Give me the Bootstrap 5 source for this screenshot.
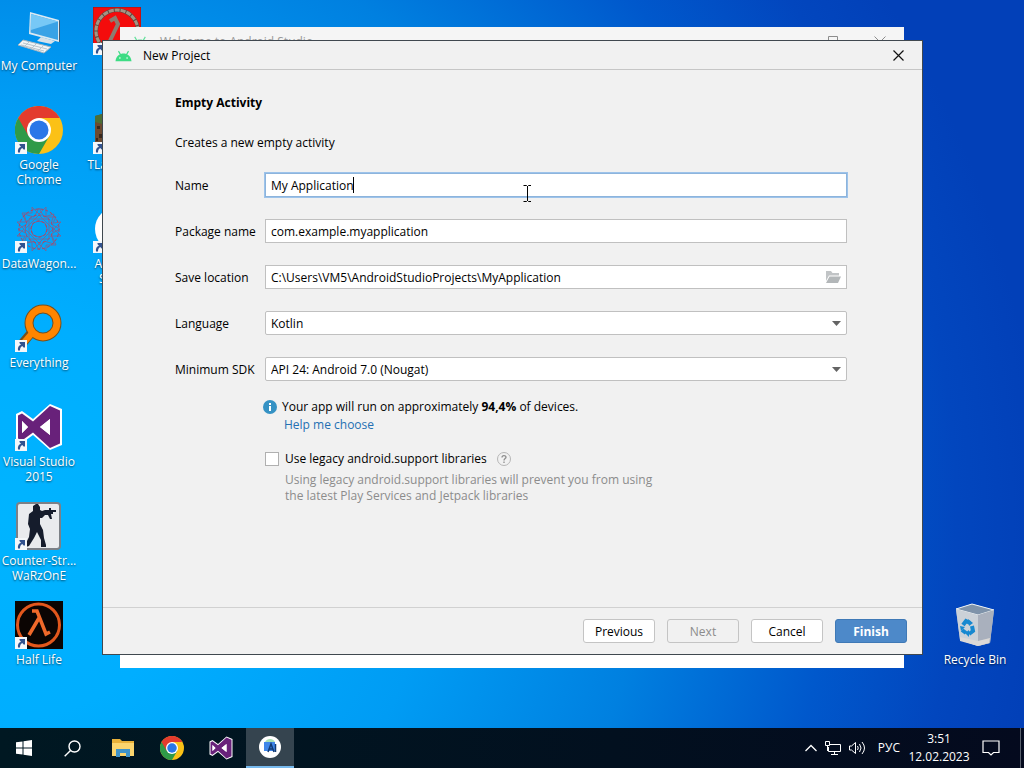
<!DOCTYPE html>
<html lang="en">
<head>
  <meta charset="UTF-8">
  <meta name="viewport" content="width=device-width, initial-scale=1">
  <title>New Project</title>
  <!-- Bootstrap 5 CSS -->
  <link href="https://cdn.jsdelivr.net/npm/bootstrap@5.3.0/dist/css/bootstrap.min.css" rel="stylesheet">
  <style>
    body {
      font-family: "Open Sans", "Noto Sans", sans-serif;
      font-size: 12px;
      line-height: 16px;
      color: #000;
      background: radial-gradient(ellipse 1040px 1000px at 0 520px, #00b4ff 0%, #00aeff 20%, #009cf4 42%, #0080e0 62%, #0058cc 80%, #0246be 92%, #0240b8 100%);
    }
    svg {
      display: block;
      flex-shrink: 0;
    }

    /* Desktop icons */
    .icon-grid {
      display: grid;
      grid-auto-flow: column;
      grid-template-rows: repeat(7, 99px);
      grid-auto-columns: 78px;
    }
    .icon-grid-end {
      margin-right: 10px;
    }
    .icon-grid-end .desk-icon {
      grid-row: 7;
    }
    .desk-icon {
      padding-top: 7px;
      line-height: 15px;
      gap: 3px;
      color: #fff;
      text-shadow: 0 1px 2px rgba(0, 0, 0, .6);
    }

    /* Windows */
    .welcome-window {
      top: 27px;
      bottom: 60px;
      left: 120px;
      right: 120px;
      background: linear-gradient(#f5f5f5 40px, #fff 40px);
      color: #999;
    }
    .welcome-title {
      padding: 9px 18px 0 11px;
      gap: 11px;
      line-height: 12px;
    }
    .project-window {
      top: 40px;
      bottom: 73px;
      left: 102px;
      right: 101px;
      background: #f1f1f1;
      border: 1px solid #40484f;
    }
    .win-title {
      height: 29px;
      padding: 1px 0 0 12px;
      gap: 11px;
      border-bottom: 1px solid #c6c6c6;
    }
    .plain-btn {
      border: 0;
      padding: 0;
      background: none;
      color: inherit;
    }
    .close-btn {
      width: 48px;
      height: 27px;
    }

    /* Form */
    .win-body {
      padding: 25px 75px 0 72px;
    }
    .form-rows {
      display: grid;
      grid-template-columns: 90px 1fr;
      row-gap: 22px;
      align-items: center;
      margin-top: 22px;
    }
    .form-rows label {
      padding-top: 2px;
    }
    .field {
      width: 100%;
      height: 24px;
      padding: 1px 5px 0;
      border: 1px solid #c0c0c0;
      border-radius: 0;
      background-color: #fff;
      color: #000;
      outline: 0;
    }
    .field-active {
      border-color: #8db4dc;
      box-shadow: 0 0 0 1px #9dc3ea;
    }
    select.field {
      appearance: none;
      border-radius: 2px;
    }
    .field-end {
      top: 5px;
      right: 6px;
    }
    .caret {
      top: 4px;
      left: 88px;
      width: 1px;
      height: 16px;
      background: #000;
    }
    .pointer {
      top: 12px;
      left: 258px;
    }
    .hints {
      margin: 17px 0 0 88px;
      line-height: 18px;
    }
    .hint-row {
      gap: 5px;
    }
    .help-link {
      margin-left: 21px;
      color: #2470b3;
    }
    .legacy-row {
      margin-top: 16px;
      padding-left: 2px;
      gap: 6px;
    }
    .tick {
      appearance: none;
      width: 14px;
      height: 14px;
      border: 1px solid #b0b0b0;
      background: #fff;
    }
    .legacy-note {
      padding-left: 22px;
      margin-top: 4px;
      line-height: 16px;
      color: #8c8c8c;
    }
    .win-footer {
      padding: 11px 15px 11px;
      gap: 12px;
      border-top: 1px solid #d1d1d1;
    }
    .wiz-btn {
      width: 72px;
      height: 24px;
      padding: 2px 0 0;
      border: 1px solid #c4c4c4;
      border-radius: 3px;
      background: #fff;
      color: #000;
    }
    .wiz-btn:disabled {
      background: #f1f1f1;
      color: #8c8c8c;
    }
    .wiz-primary {
      background: #4d89c9;
      border-color: #3f79b6;
      color: #fff;
    }

    /* Taskbar */
    .taskbar {
      height: 40px;
      background: linear-gradient(90deg, #001822, #02101f 60%, #040a1e);
      color: #fff;
    }
    .task-btn {
      width: 48px;
      height: 40px;
    }
    .task-apps {
      margin-left: 3px;
      gap: 1px;
    }
    .task-active {
      background: #35444f;
      border-bottom: 2px solid #76b9ed;
    }
    .tray {
      gap: 8px;
    }
    .clock {
      width: 62px;
      line-height: 18px;
    }
    .show-desktop {
      width: 4px;
      height: 40px;
      border-left: 1px solid #59606d;
    }
  </style>
</head>
<body class="vh-100 d-flex flex-column overflow-hidden">

  <!-- Shared icon shapes -->
  <svg width="0" height="0" class="position-absolute" aria-hidden="true">
    <defs>
      <symbol id="shortcut" viewBox="0 0 12 12">
        <rect width="12" height="12" fill="#f4f7fa"/>
        <path d="M3 10.500C2.500 7.500 3.600 5.400 6 4.800L4.600 3.200 4.400 2H10v5.600L8.600 7.400 7.300 6.100C5.600 7 5 8.300 5 10.500Z" fill="#31528f"/>
      </symbol>
      <symbol id="chrome" viewBox="0 0 48 48">
        <circle cx="24" cy="24" r="24" fill="#fbc116"/>
        <path d="M24 24 3.200 12A24 24 0 0 0 24 48L34.400 30Z" fill="#2f9a48"/>
        <path d="M24 12H44.800A24 24 0 0 0 3.200 12L13.600 30 24 24Z" fill="#e33b2e"/>
        <circle cx="24" cy="24" r="12" fill="#fff"/>
        <circle cx="24" cy="24" r="9.500" fill="#2a77e8"/>
      </symbol>
      <symbol id="vstudio" viewBox="0 0 48 48">
        <path d="M35 1 47 6V42L35 47 18 32 7 40 1 37V11L7 8 18 16Z" fill="#fff"/>
        <path d="M35 3 45 7.500V40.500L35 45 18 29.500 7 37.500 3 35.500V12.500L7 10.500 18 18.500ZM35 16 25 24 35 32ZM7 18V30L13 24Z" fill="#68217a" fill-rule="evenodd"/>
        <path d="M35 16 25 24 35 32ZM7 18V30L13 24Z" fill="#fff"/>
      </symbol>
      <symbol id="droid" viewBox="0 0 18 12">
        <path d="M.5 11.500C.8 8 2.600 5.500 5 4.300L3.200 1.200 4.200 .5 6.200 3.900C8 3.300 10 3.300 11.800 3.900L13.800 .5 14.800 1.200 13 4.300C15.400 5.500 17.200 8 17.500 11.500Z" fill="#3ddc84"/>
        <circle cx="5.200" cy="8" r=".8" fill="#fff"/>
        <circle cx="12.800" cy="8" r=".8" fill="#fff"/>
      </symbol>
    </defs>
  </svg>

  <!-- Desktop -->
  <main class="flex-grow-1 position-relative d-flex justify-content-between align-items-start">
    <div class="icon-grid">
      <a href="#" class="desk-icon d-flex flex-column align-items-center text-center text-decoration-none">
        <svg width="48" height="48" viewBox="0 0 48 48">
          <path d="M15 5 44 13V35L14 27Z" fill="#dbe9f2"/>
          <path d="M16 7 43 14.500V33L15.500 25.500Z" fill="#39a2e6"/>
          <path d="M16 7 43 14.500 16 23Z" fill="#77c8f6"/>
          <path d="M44 13 45 13.500V34.500L44 35Z" fill="#3d5972"/>
          <path d="M26 30 33 32 40 34 36 37 22 34Z" fill="#d7e1e8"/>
          <path d="M8 33 36 40 29 46 3 38Z" fill="#f1f4f6" stroke="#a5b4bf"/>
          <path d="M8 36 32 42M6 38 29 44M14 35 9 40M21 37 16 42M28 39 23 44" stroke="#b7c4cd"/>
        </svg>
        <span>My Computer</span>
      </a>
      <a href="#" class="desk-icon d-flex flex-column align-items-center text-center text-decoration-none">
        <svg width="48" height="48" viewBox="0 0 48 48">
          <use href="#chrome"/>
          <use href="#shortcut" y="36" width="12" height="12"/>
        </svg>
        <span>Google<br>Chrome</span>
      </a>
      <a href="#" class="desk-icon d-flex flex-column align-items-center text-center text-decoration-none">
        <svg width="48" height="48" viewBox="0 0 48 48">
          <g fill="none" stroke="#6f6a9c" stroke-width="1">
            <path d="M17 2 24 9 31 2V12H41L38 18 46 17 39 24 46 31H37L41 40H31V46L24 39 17 46V37H7L10 31 2 31 9 24 2 17H11L7 8H17Z"/>
            <path d="M24 3 29 12 39 9 36 19 45 24 36 29 39 39 29 36 24 45 19 36 9 39 12 29 3 24 12 19 9 9 19 12Z"/>
            <path d="M14 14H34V34H14ZM24 10 38 24 24 38 10 24Z"/>
            <path d="M24 16 30 18 32 24 30 30 24 32 18 30 16 24 18 18Z"/>
          </g>
          <g fill="none" stroke="#b8405f" stroke-dasharray="3 2">
            <circle cx="24" cy="24" r="8"/>
            <circle cx="24" cy="24" r="14"/>
            <circle cx="24" cy="24" r="20"/>
          </g>
          <use href="#shortcut" y="36" width="12" height="12"/>
        </svg>
        <span>DataWagon...</span>
      </a>
      <a href="#" class="desk-icon d-flex flex-column align-items-center text-center text-decoration-none">
        <svg width="48" height="48" viewBox="0 0 48 48">
          <path d="M17 28 6 41" stroke="#75501f" stroke-width="9"/>
          <circle cx="28" cy="19" r="14" fill="none" stroke="#75501f" stroke-width="9"/>
          <path d="M18 28 6 42" stroke="#ff8500" stroke-width="6"/>
          <circle cx="28" cy="19" r="14" fill="none" stroke="#ff8500" stroke-width="7"/>
          <use href="#shortcut" y="36" width="12" height="12"/>
        </svg>
        <span>Everything</span>
      </a>
      <a href="#" class="desk-icon d-flex flex-column align-items-center text-center text-decoration-none">
        <svg width="48" height="48" viewBox="0 0 48 48">
          <use href="#vstudio"/>
          <use href="#shortcut" y="36" width="12" height="12"/>
        </svg>
        <span>Visual Studio<br>2015</span>
      </a>
      <a href="#" class="desk-icon d-flex flex-column align-items-center text-center text-decoration-none">
        <svg width="48" height="48" viewBox="0 0 48 48">
          <rect x="2" y="1" width="43" height="46" rx="3" fill="#e9ebee" stroke="#7b8087" stroke-width="2"/>
          <path d="M18 4 21 2H23L25 5V8L27 9 30 8H34V6H36V8H41V10H38V12L36 12 37 17H35L33 13H30L27 16H25V22L28 28 29 36 31 43V45H26V38L22 30 19 36 14 44 11 45 10 43 14 35 15 27 13 22 14 12 18 9Z" fill="#151c2c"/>
          <use href="#shortcut" y="36" width="12" height="12"/>
        </svg>
        <span>Counter-Str...<br>WaRzOnE</span>
      </a>
      <a href="#" class="desk-icon d-flex flex-column align-items-center text-center text-decoration-none">
        <svg width="48" height="48" viewBox="0 0 48 48">
          <rect width="48" height="48" fill="#0b0503"/>
          <circle cx="23.500" cy="24" r="21" fill="none" stroke="#e2571c" stroke-width="3"/>
          <path d="M17 10H22L31 33 35 31M24 17 14 34" fill="none" stroke="#f0692a" stroke-width="3.500"/>
          <use href="#shortcut" y="36" width="12" height="12"/>
        </svg>
        <span>Half Life</span>
      </a>
      <a href="#" class="desk-icon d-flex flex-column align-items-center text-center text-decoration-none" aria-label="Half-Life">
        <svg width="48" height="48" viewBox="0 0 48 48">
          <rect width="48" height="48" fill="#f40c0c" stroke="#8f1a1a"/>
          <circle cx="24" cy="24" r="21" fill="none" stroke="#5d4a42" stroke-width="4"/>
          <circle cx="24" cy="24" r="21" fill="none" stroke="#a59383" stroke-width="3" stroke-dasharray="5 1"/>
          <path d="M17 14 22 11 25 17 15 38" fill="none" stroke="#8d7c70" stroke-width="4"/>
          <use href="#shortcut" y="36" width="12" height="12"/>
        </svg>
      </a>
      <a href="#" class="desk-icon d-flex flex-column align-items-center text-center text-decoration-none">
        <svg width="48" height="48" viewBox="0 0 48 48">
          <path d="M2 10 24 4 46 10V40L24 46 2 40Z" fill="#6c4a31"/>
          <path d="M2 10 24 4 46 10V18L24 22 2 16Z" fill="#4c6f35"/>
          <path d="M4 20h3v3H4ZM6 28h3v4H6ZM3 32h2v3H3Z" fill="#3b281c"/>
          <use href="#shortcut" y="36" width="12" height="12"/>
        </svg>
        <span>TLauncher</span>
      </a>
      <a href="#" class="desk-icon d-flex flex-column align-items-center text-center text-decoration-none">
        <svg width="48" height="48" viewBox="0 0 48 48">
          <circle cx="24" cy="24" r="22" fill="#fff"/>
          <use href="#shortcut" y="36" width="12" height="12"/>
        </svg>
        <span>Android<br>Studio</span>
      </a>
    </div>

    <div class="icon-grid icon-grid-end">
      <a href="#" class="desk-icon d-flex flex-column align-items-center text-center text-decoration-none">
        <svg width="48" height="48" viewBox="0 0 48 48">
          <path d="M5 8 21 3 43 9 39 42 27 45 9 39Z" fill="#b9c3cf"/>
          <path d="M5 8 21 3 43 9 27 14Z" fill="#7f93aa" stroke="#edf2f5"/>
          <path d="M5 8 27 14V45L9 39Z" fill="#cbd1d8"/>
          <path d="M27 14 43 9 39 42 27 45Z" fill="#a9b0bd"/>
          <path d="M9 36 27 40 39 37 38 42 27 45 9 40Z" fill="#dcd9d7"/>
          <g fill="none" stroke="#1688d0" stroke-width="4">
            <path d="M12 24 15 20 19 22M21 25 22 30 18 33M15 32 11 29"/>
          </g>
          <path d="M17 18 22 22 18 25ZM18 29V36L14 32ZM9 25 14 26 10 30Z" fill="#1688d0"/>
        </svg>
        <span>Recycle Bin</span>
      </a>
    </div>

    <!-- Welcome window, behind the wizard -->
    <section class="welcome-window position-absolute">
      <div class="welcome-title d-flex align-items-center">
        <svg width="18" height="12" opacity=".8"><use href="#droid"/></svg>
        <span class="flex-grow-1">Welcome to Android Studio</span>
        <svg width="58" height="12" viewBox="0 0 58 12" fill="none" stroke="#8c8c8c">
          <path d="M.5.500H9.500V9.500H.5ZM46.500.500 57.500 11.500M57.500.500 46.500 11.500"/>
        </svg>
      </div>
    </section>

    <!-- New project wizard -->
    <section class="project-window position-absolute d-flex flex-column">
      <div class="win-title d-flex align-items-center">
        <svg width="17" height="12"><use href="#droid"/></svg>
        <span class="flex-grow-1">New Project</span>
        <button type="button" class="plain-btn close-btn d-flex align-items-center justify-content-center" aria-label="Close">
          <svg width="11" height="11" viewBox="0 0 11 11"><path d="M.5.5 10.500 10.500M10.500.5.5 10.500" stroke="#111" stroke-width="1.200"/></svg>
        </button>
      </div>

      <form class="flex-grow-1 d-flex flex-column">
        <div class="win-body flex-grow-1">
          <div class="fw-bold">Empty Activity</div>
          <div class="mt-4">Creates a new empty activity</div>

          <div class="form-rows">
            <label for="appName">Name</label>
            <div class="position-relative">
              <input type="text" class="field field-active d-block" id="appName" value="My Application">
              <span class="caret position-absolute"></span>
              <svg class="pointer position-absolute" width="8" height="17" viewBox="0 0 8 17" fill="none" stroke="#000">
                <path d="M.5.500H3.500L4.500 1.500 5.500.500H8M4.500 1V16M.5 16.500H3.500L4.500 15.500 5.500 16.500H8"/>
              </svg>
            </div>

            <label for="packageName">Package name</label>
            <input type="text" class="field" id="packageName" value="com.example.myapplication">

            <label for="saveLocation">Save location</label>
            <div class="position-relative">
              <input type="text" class="field d-block" id="saveLocation" value="C:\Users\VM5\AndroidStudioProjects\MyApplication">
              <button type="button" class="plain-btn field-end position-absolute" aria-label="Browse">
                <svg width="16" height="14" viewBox="0 0 16 14">
                  <path d="M1 1H6L7.500 3H14V5.500H4L1 11Z" fill="#c1c4c6"/>
                  <path d="M4.500 6.500H16L13 13H1Z" fill="#b3b7b9"/>
                </svg>
              </button>
            </div>

            <label for="language">Language</label>
            <div class="position-relative">
              <select class="field d-block" id="language">
                <option>Kotlin</option>
                <option>Java</option>
              </select>
              <svg class="field-end position-absolute pe-none" width="10" height="14" viewBox="0 0 10 14"><path d="M1 5H10L5.500 10Z" fill="#646464"/></svg>
            </div>

            <label for="minSdk">Minimum SDK</label>
            <div class="position-relative">
              <select class="field d-block" id="minSdk">
                <option>API 24: Android 7.0 (Nougat)</option>
              </select>
              <svg class="field-end position-absolute pe-none" width="10" height="14" viewBox="0 0 10 14"><path d="M1 5H10L5.500 10Z" fill="#646464"/></svg>
            </div>
          </div>

          <div class="hints">
            <div class="hint-row d-flex align-items-center">
              <svg width="14" height="14" viewBox="0 0 14 14">
                <circle cx="7" cy="7" r="7" fill="#3592c4"/>
                <path d="M6 3H8V5H6ZM6 6H8V11H6Z" fill="#fff"/>
              </svg>
              <span>Your app will run on approximately <b>94,4%</b> of devices.</span>
            </div>
            <a href="#" class="help-link d-inline-block text-decoration-none">Help me choose</a>

            <div class="legacy-row d-flex align-items-center">
              <input type="checkbox" class="tick m-0" id="legacyLibs">
              <label for="legacyLibs">Use legacy android.support libraries</label>
              <svg class="ms-1" width="14" height="14" viewBox="0 0 14 14" fill="none">
                <circle cx="7" cy="7" r="6.500" stroke="#b5b5b5"/>
                <path d="M5 5.500C5 3 9 3 9 5.300 9 6.600 7 6.700 7 8.500M7 9.500V11" stroke="#8d8d8d" stroke-width="1.300"/>
              </svg>
            </div>
            <div class="legacy-note">Using legacy android.support libraries will prevent you from using<br>the latest Play Services and Jetpack libraries</div>
          </div>
        </div>

        <div class="win-footer d-flex justify-content-end">
          <button type="button" class="wiz-btn">Previous</button>
          <button type="button" class="wiz-btn" disabled>Next</button>
          <button type="button" class="wiz-btn">Cancel</button>
          <button type="button" class="wiz-btn wiz-primary fw-bold">Finish</button>
        </div>
      </form>
    </section>
  </main>

  <!-- Taskbar -->
  <footer class="taskbar d-flex align-items-center flex-shrink-0">
    <button type="button" class="plain-btn task-btn d-flex align-items-center justify-content-center" aria-label="Start">
      <svg width="16" height="16" viewBox="0 0 16 16" fill="#fff"><path d="M0 2.300 6.500 1.400V7.500H0ZM7.500 1.200 16 0V7.500H7.500ZM0 8.500H6.500V14.600L0 13.700ZM7.500 8.500H16V16L7.500 14.800Z"/></svg>
    </button>
    <button type="button" class="plain-btn task-btn d-flex align-items-center justify-content-center" aria-label="Search">
      <svg width="17" height="17" viewBox="0 0 17 17" fill="none" stroke="#fff" stroke-width="1.400"><circle cx="10.500" cy="6.500" r="5.500"/><path d="M6.500 10.500.7 16.300"/></svg>
    </button>
    <div class="task-apps d-flex">
      <button type="button" class="plain-btn task-btn d-flex align-items-center justify-content-center" aria-label="File Explorer">
        <svg width="22" height="18" viewBox="0 0 22 18">
          <path d="M0 0H8L10 2H22V17H0Z" fill="#e8b13a"/>
          <path d="M0 4H22V17H0Z" fill="#fbd56e"/>
          <path d="M4 10H18V18H14V14H8V18H4Z" fill="#3f93c9"/>
        </svg>
      </button>
      <button type="button" class="plain-btn task-btn d-flex align-items-center justify-content-center" aria-label="Google Chrome">
        <svg width="24" height="24"><use href="#chrome"/></svg>
      </button>
      <button type="button" class="plain-btn task-btn d-flex align-items-center justify-content-center" aria-label="Visual Studio">
        <svg width="24" height="24"><use href="#vstudio"/></svg>
      </button>
      <button type="button" class="plain-btn task-btn task-active d-flex align-items-center justify-content-center" aria-label="Android Studio">
        <svg width="22" height="22" viewBox="0 0 22 22">
          <circle cx="11" cy="11" r="11" fill="#fff"/>
          <path d="M6 6C8 2 14 2 16 6Z" fill="#a8dfb4"/>
          <path d="M5 6H16V15H5Z" fill="#3f86e8"/>
          <path d="M9 16 12 8 15 16M10 13H14M16.500 8V16" stroke="#123a73" stroke-width="1.500" fill="none"/>
        </svg>
      </button>
    </div>

    <div class="tray d-flex align-items-center ms-auto">
      <svg width="12" height="8" viewBox="0 0 12 8" fill="none" stroke="#fff" stroke-width="1.300"><path d="M.5 7 6 1.500 11.500 7"/></svg>
      <svg width="16" height="14" viewBox="0 0 16 14" fill="none" stroke="#fff"><path d="M5 3.500H15.500V10.500H3.500V6M9.500 10.500V13.500M6 13.500H13M.5.5H4.500V4.500H.5ZM2.500 4.500V10"/></svg>
      <svg width="17" height="14" viewBox="0 0 17 14" fill="none" stroke="#fff"><path d="M.5 5H2.500L6.500 1.500V12.500L2.500 9H.5ZM8.500 5Q10 7 8.500 9M10.500 3Q13.500 7 10.500 11M13 1Q18 7 13 13"/></svg>
      <span class="ms-1">РУС</span>
      <div class="clock text-center">3:51<br>12.02.2023</div>
      <svg class="ms-1 me-2" width="18" height="16" viewBox="0 0 18 16" fill="none" stroke="#fff" stroke-width="1.200"><path d="M1 1H17V12.500H11.500L9 15 6.500 12.500H1Z"/></svg>
      <span class="show-desktop ms-1"></span>
    </div>
  </footer>

  <!-- Bootstrap 5 JS -->
  <script src="https://cdn.jsdelivr.net/npm/bootstrap@5.3.0/dist/js/bootstrap.bundle.min.js"></script>
</body>
</html>
